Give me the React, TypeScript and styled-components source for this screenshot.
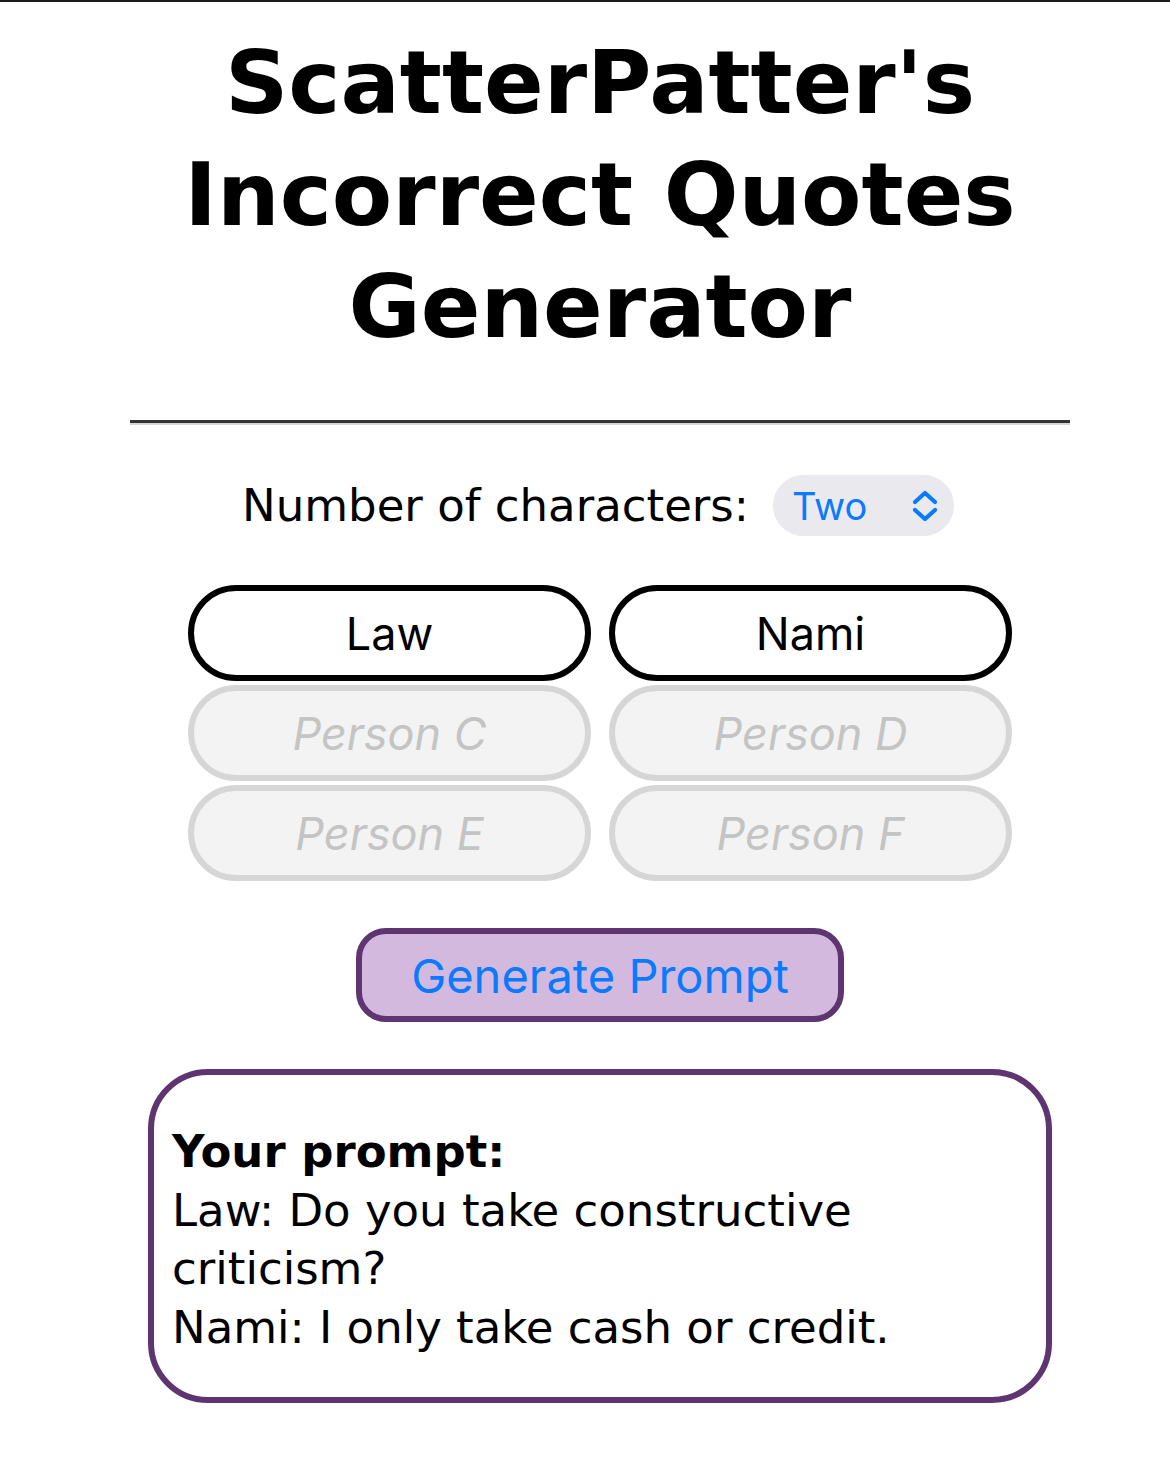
import React from "react";
import styled, { createGlobalStyle } from "styled-components";

const GlobalStyle = createGlobalStyle`
  html, body {
    margin: 0;
    padding: 0;
    background: #ffffff;
  }
  body {
    border-top: 2px solid #1c1c1c;
    font-family: "DejaVu Sans", Verdana, sans-serif;
    font-size: 45px;
    color: #000;
  }
`;

const Page = styled.main`
  display: flex;
  flex-direction: column;
  align-items: center;
  padding: 25px 0 60px 30px;
`;

const Title = styled.h1`
  margin: 0;
  font-family: "DejaVu Sans", Verdana, sans-serif;
  font-weight: 700;
  font-size: 88px;
  line-height: 112px;
  text-align: center;
  width: 900px;
`;

const Rule = styled.hr`
  width: 940px;
  height: 0;
  margin: 57px 0 0;
  border: none;
  border-top: 3px solid #333333;
  border-bottom: 2px solid #d6d6d6;
`;

const CountRow = styled.div`
  display: flex;
  align-items: center;
  gap: 24px;
  margin-top: 50px;
  padding-right: 4px;
`;

const CountLabel = styled.label`
  font-size: 45px;
  line-height: 58px;
`;

const SelectPill = styled.div`
  display: flex;
  align-items: center;
  justify-content: space-between;
  box-sizing: border-box;
  width: 181px;
  height: 61px;
  padding: 0 15px 0 19px;
  border-radius: 31px;
  background: #e9e9ee;
  color: #0a7aff;
  font-family: Inter, "Liberation Sans", sans-serif;
  font-size: 38px;
`;

const Grid = styled.div`
  display: grid;
  grid-template-columns: 403px 403px;
  column-gap: 18px;
  row-gap: 4px;
  margin-top: 49px;
`;

const NameInput = styled.input`
  box-sizing: border-box;
  width: 100%;
  height: 96px;
  margin: 0;
  border: 6px solid #000;
  border-radius: 48px;
  background: #ffffff;
  color: #000;
  text-align: center;
  font-family: Inter, "Liberation Sans", sans-serif;
  font-size: 45px;
  outline: none;
  padding: 0 20px;

  &:disabled {
    border-color: #d6d6d6;
    background: #f3f3f3;
  }

  &::placeholder {
    color: #c4c4c4;
    font-style: italic;
    opacity: 1;
  }
`;

const GenerateButton = styled.button`
  box-sizing: border-box;
  width: 488px;
  height: 94px;
  margin-top: 47px;
  border: 6px solid #5e3571;
  border-radius: 30px;
  background: #d2b9dd;
  color: #0a7aff;
  font-family: Inter, "Liberation Sans", sans-serif;
  font-size: 47px;
  padding: 0;
  cursor: pointer;
`;

const PromptBox = styled.section`
  box-sizing: border-box;
  width: 904px;
  margin-top: 47px;
  padding: 48px 18px 40px;
  border: 6px solid #5e3571;
  border-radius: 60px;
  font-size: 45px;
  line-height: 58.5px;
`;

const PromptHeading = styled.strong`
  display: block;
  font-weight: 700;
`;

const PromptLine = styled.div``;

function Chevrons() {
  return (
    <svg width="28" height="34" viewBox="0 0 28 34" fill="none" aria-hidden="true">
      <path d="M4 13 L14 4 L24 13" stroke="#0a7aff" strokeWidth="4.2" strokeLinecap="round" strokeLinejoin="round" />
      <path d="M4 21 L14 30 L24 21" stroke="#0a7aff" strokeWidth="4.2" strokeLinecap="round" strokeLinejoin="round" />
    </svg>
  );
}

const names = [
  { value: "Law", placeholder: "Person A" },
  { value: "Nami", placeholder: "Person B" },
  { value: "", placeholder: "Person C" },
  { value: "", placeholder: "Person D" },
  { value: "", placeholder: "Person E" },
  { value: "", placeholder: "Person F" },
];

export default function App() {
  return (
    <>
      <GlobalStyle />
      <Page>
        <Title>ScatterPatter's Incorrect Quotes Generator</Title>
        <Rule />
        <CountRow>
          <CountLabel>Number of characters:</CountLabel>
          <SelectPill>
            <span>Two</span>
            <Chevrons />
          </SelectPill>
        </CountRow>
        <Grid>
          {names.map((n) =>
            n.value ? (
              <NameInput key={n.placeholder} readOnly value={n.value} placeholder={n.placeholder} />
            ) : (
              <NameInput key={n.placeholder} disabled placeholder={n.placeholder} />
            )
          )}
        </Grid>
        <GenerateButton type="button">Generate Prompt</GenerateButton>
        <PromptBox>
          <PromptHeading>Your prompt:</PromptHeading>
          <PromptLine>Law: Do you take constructive criticism?</PromptLine>
          <PromptLine>Nami: I only take cash or credit.</PromptLine>
        </PromptBox>
      </Page>
    </>
  );
}
